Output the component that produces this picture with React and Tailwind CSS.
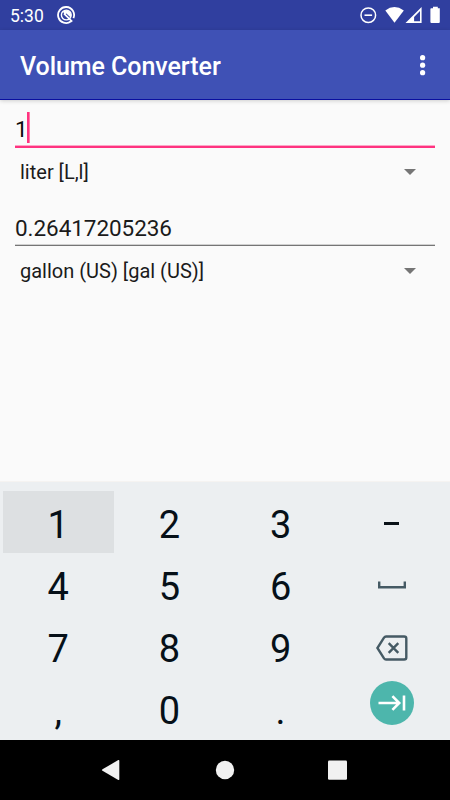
import React from "react";

function StatusBar() {
  return (
    <div className="flex h-[30px] items-center bg-[#303f9f] pl-[10px] pr-[9px] text-white">
      <span className="w-[47px] pt-[1px] text-[17.5px] leading-[30px]">5:30</span>
      <svg className="h-[18px] w-[18px]" viewBox="0 0 18 18" fill="none" stroke="white">
        <path d="M14 15.3A8 8 0 1 1 16.4 12.2" strokeWidth="1.8" />
        <circle cx="9.3" cy="9" r="4.9" strokeWidth="1.4" />
        <path d="M6 5.4A5 5 0 0 1 13.6 11.5L9.4 7.4 7.6 8.7Z" fill="white" stroke="none" />
        <path d="m7 7.6 8.2 8" strokeWidth="1.7" />
      </svg>
      <svg className="ml-auto h-[18px] w-[82px]" viewBox="0 0 82 18">
        <circle cx="9.3" cy="9.2" r="7.3" fill="none" stroke="white" strokeWidth="1.5" />
        <path d="M5.5 9.2h7.6" stroke="white" strokeWidth="1.6" />
        <path d="M26.3 4.5Q35.3-2.3 44.8 4.5L35.5 16.8Z" fill="white" />
        <path fillRule="evenodd" d="M46.5 17 62.6 1V17ZM55.1 15.2H61V5L55.1 10.9Z" fill="white" />
        <path d="M73 2.2h2V.8h4.8v1.4h2V16q0 1-1 1h-7.4q-1 0-1-1V3.1q0-.9.9-.9Z" transform="translate(-1 0)" fill="white" />
      </svg>
    </div>
  );
}

function AppBar() {
  return (
    <header className="relative flex h-[70px] items-center justify-between border-b border-[#0a0fa0] bg-[#3f51b5] pl-5 pr-[24.5px] text-white shadow-[0_1px_4px_rgba(0,0,0,0.18)]">
      <h1 className="pt-[5px] text-[25px] font-medium leading-8 tracking-[-0.05px]">Volume Converter</h1>
      <svg className="h-[22px] w-[6px]" viewBox="0 0 6 22" fill="white">
        <circle cx="2.6" cy="3.7" r="2.6" />
        <circle cx="2.6" cy="11.2" r="2.6" />
        <circle cx="2.6" cy="18.7" r="2.6" />
      </svg>
    </header>
  );
}

function UnitSpinner({ label }) {
  return (
    <div className="flex h-[50px] items-center justify-between pl-[5px] pr-[19px] text-[20px] text-[#1b1b1b]">
      <span>{label}</span>
      <svg className="h-[6px] w-[12px]" viewBox="0 0 12 6" fill="#757575">
        <path d="M0 0h12L6 6Z" />
      </svg>
    </div>
  );
}

const KEYS = ["1", "2", "3", "-", "4", "5", "6", "space", "7", "8", "9", "delete", ",", "0", ".", "next"];

function KeyFace({ name }) {
  if (name === "-") return <span className="mt-[3px] h-[3px] w-[15px] bg-[#0a1218]" />;
  if (name === "space")
    return (
      <svg className="mt-[2px] h-[8px] w-[28px]" viewBox="0 0 28 8" fill="none" stroke="#455a64" strokeWidth="2.4">
        <path d="M1.2 .5V6.3H26.8V.5" />
      </svg>
    );
  if (name === "delete")
    return (
      <svg className="mt-[3px] h-[26px] w-[32px]" viewBox="0 0 32 26" fill="none" stroke="#455a64" strokeWidth="2.4">
        <path d="M10 1.5H28.1Q30.3 1.5 30.3 3.5V22.5Q30.3 24.5 28.1 24.5H10Q8.8 24.5 8 23.4L1.4 13 8 2.6Q8.8 1.5 10 1.5Z" />
        <path d="m12.7 8.2 9.6 9.6m0-9.6-9.6 9.6" />
      </svg>
    );
  if (name === "next")
    return (
      <span className="mb-[11px] flex h-[44px] w-[44px] items-center justify-center rounded-full bg-[#4db6ac]">
        <svg className="h-[18px] w-[28px]" viewBox="0 0 28 18" fill="none" stroke="white" strokeWidth="2.6">
          <path d="M.5 9H21M14.4 2.2 21.2 9l-6.8 6.8M26 1.5v15" />
        </svg>
      </span>
    );
  return <span className="pt-[6px] text-[38px] leading-none text-[#061018]">{name}</span>;
}

function Keypad() {
  return (
    <div className="grid h-[259px] grid-cols-4 grid-rows-[62px_62px_62px_62px] border-t border-[#f5f3f1] bg-[#eceff1] px-[2.5px] pt-[9px]">
      {KEYS.map((key) => (
        <button
          key={key}
          className={key === "1" ? "flex items-center justify-center bg-[#dde0e2]" : "flex items-center justify-center"}
        >
          <KeyFace name={key} />
        </button>
      ))}
    </div>
  );
}

function NavBar() {
  return (
    <nav className="flex h-[60px] items-center justify-center bg-black">
      <svg className="h-[22px] w-[248px]" viewBox="0 0 248 22" fill="#f1f1f1">
        <path d="M1.5 10.2 17.3 1.1q1-.5 1 .6V20.3q0 1.1-1 .6L1.5 11.8q-1.2-.8 0-1.6Z" />
        <circle cx="124" cy="11" r="9.2" />
        <rect x="227" y="1.5" width="19" height="19.2" rx="1.2" />
      </svg>
    </nav>
  );
}

export default function App() {
  return (
    <div className="flex h-[800px] w-[450px] flex-col overflow-hidden bg-[#fafafa] font-[Roboto,sans-serif]">
      <StatusBar />
      <AppBar />
      <main className="flex-1 px-[15px] pt-[11px]">
        <div className="flex h-[37px] items-start border-b-2 border-[#ff3380] text-[22.5px] text-[#0c0c0c] shadow-[inset_0_-1px_0_#fda6c6]">
          <span className="w-[12px] pt-[2px] leading-[32px]">1</span>
          <span className="mt-[1px] h-[31px] w-[3px] border-r border-[#ff7aa8] bg-[#ff3380]" />
        </div>
        <div className="-mt-px">
          <UnitSpinner label="liter [L,l]" />
        </div>
        <div className="mt-[13px] flex h-[36px] items-start border-b border-[#757575] text-[22.5px] tracking-[-0.06px] text-[#1b1b1b] shadow-[inset_0_-1px_0_#d0d0d0]">
          <span className="leading-[37px]">0.26417205236</span>
        </div>
        <UnitSpinner label="gallon (US) [gal (US)]" />
      </main>
      <Keypad />
      <NavBar />
    </div>
  );
}
